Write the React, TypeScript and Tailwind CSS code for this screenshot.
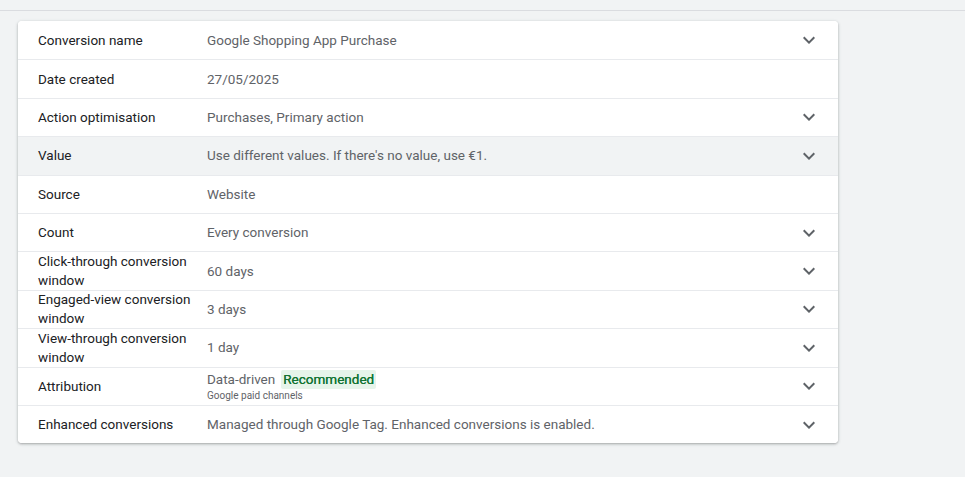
import type { ReactNode } from "react";

type Row = {
  label: string;
  value: ReactNode;
  expandable: boolean;
  highlighted?: boolean;
};

function ExpandMore() {
  return (
    <svg viewBox="0 0 24 24" className="h-6 w-6 fill-[#5f6368]">
      <path d="M16.59 8.59 12 13.17 7.41 8.59 6 10l6 6 6-6z" />
    </svg>
  );
}

const rows: Row[] = [
  { label: "Conversion name", value: "Google Shopping App Purchase", expandable: true },
  { label: "Date created", value: "27/05/2025", expandable: false },
  { label: "Action optimisation", value: "Purchases, Primary action", expandable: true },
  {
    label: "Value",
    value: "Use different values. If there's no value, use €1.",
    expandable: true,
    highlighted: true,
  },
  { label: "Source", value: "Website", expandable: false },
  { label: "Count", value: "Every conversion", expandable: true },
  { label: "Click-through conversion window", value: "60 days", expandable: true },
  { label: "Engaged-view conversion window", value: "3 days", expandable: true },
  { label: "View-through conversion window", value: "1 day", expandable: true },
  {
    label: "Attribution",
    value: (
      <div className="flex flex-col">
        <div className="flex items-center gap-[6px] leading-[19px]">
          <span>Data-driven</span>
          <span className="rounded-[2px] bg-[#e6f4ea] px-[2px] text-[#137333] [text-shadow:0_0_0.4px_#137333]">
            Recommended
          </span>
        </div>
        <span className="text-[10px] leading-[13px] text-[#5f6368]">Google paid channels</span>
      </div>
    ),
    expandable: true,
  },
  {
    label: "Enhanced conversions",
    value: "Managed through Google Tag. Enhanced conversions is enabled.",
    expandable: true,
  },
];

export default function App() {
  return (
    <div className="min-h-[477px] bg-[#f1f3f4] font-['Roboto','Liberation_Sans',sans-serif] text-[13.5px]">
      <div className="h-[11px] border-b border-[#dadce0]" />
      <div className="pl-[18px] pt-[10px]">
        <div className="w-[820px] overflow-hidden rounded-[4px] bg-white shadow-[0_1px_2px_rgba(60,64,67,0.3),0_1px_3px_1px_rgba(60,64,67,0.12)]">
          {rows.map((row, i) => (
            <div
              key={row.label}
              className={`flex h-[38.4px] items-center pl-5 pr-[17px] ${
                i > 0 ? "border-t border-[#e8eaed]" : ""
              } ${row.highlighted ? "bg-[#f1f3f4]" : "bg-white"}`}
            >
              <div className="w-[169px] shrink-0 pr-[8px] leading-[19px] text-[#202124]">
                {row.label}
              </div>
              <div className="flex-1 leading-[19px] text-[#5f6368]">{row.value}</div>
              {row.expandable && <ExpandMore />}
            </div>
          ))}
        </div>
      </div>
    </div>
  );
}
